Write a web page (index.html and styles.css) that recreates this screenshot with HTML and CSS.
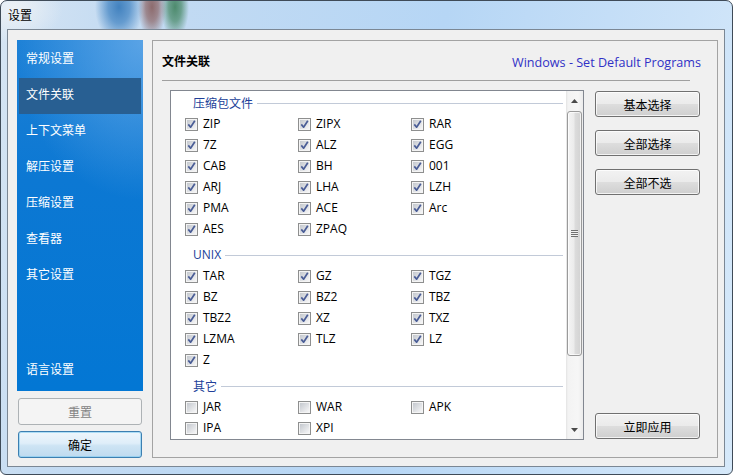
FILE: index.html
```html
<!DOCTYPE html>
<html lang="zh-CN">
<head>
<meta charset="utf-8">
<title>设置</title>
<link rel="stylesheet" href="styles.css">
</head>
<body>
<svg class="defs" width="0" height="0" aria-hidden="true">
  <defs>
    <linearGradient id="cbg" x1="0" y1="0" x2="1" y2="1">
      <stop offset="0" stop-color="#c4c8ce"/>
      <stop offset="1" stop-color="#f6f6f7"/>
    </linearGradient>
    <symbol id="box" viewBox="0 0 13 13">
      <rect x="0.5" y="0.5" width="12" height="12" fill="#f4f4f4" stroke="#8e8f8f"/>
      <rect x="2" y="2" width="9" height="9" fill="url(#cbg)"/>
    </symbol>
    <symbol id="chk" viewBox="0 0 13 13">
      <rect x="0.5" y="0.5" width="12" height="12" fill="#f4f4f4" stroke="#8e8f8f"/>
      <rect x="2" y="2" width="9" height="9" fill="url(#cbg)"/>
      <path d="M3.3 6.4 L5.6 9.2 L9.8 2.8" fill="none" stroke="#4a5d96" stroke-width="1.7" stroke-linejoin="round"/>
    </symbol>
  </defs>
</svg>

<div class="window">
  <div class="titlebar">设置</div>
  <div class="client">
    <div class="leftcol">
      <nav class="sidebar">
        <div class="nav-item">常规设置</div>
        <div class="nav-item active">文件关联</div>
        <div class="nav-item">上下文菜单</div>
        <div class="nav-item">解压设置</div>
        <div class="nav-item">压缩设置</div>
        <div class="nav-item">查看器</div>
        <div class="nav-item">其它设置</div>
        <div class="nav-item lang">语言设置</div>
      </nav>
      <button class="btn disabled wide first">重置</button>
      <button class="btn default wide">确定</button>
    </div>

    <section class="panel">
      <div class="phead">
        <span class="ptitle">文件关联</span>
        <span class="plink">Windows - Set Default Programs</span>
      </div>
      <div class="sep"></div>
      <div class="pbody">
        <div class="listbox">
          <div class="lcontent">
            <div class="ghead"><span class="cjk">压缩包文件</span><i class="gline"></i></div>
            <div class="grid">
              <label class="cb"><svg><use href="#chk"/></svg>ZIP</label>
              <label class="cb"><svg><use href="#chk"/></svg>ZIPX</label>
              <label class="cb"><svg><use href="#chk"/></svg>RAR</label>
              <label class="cb"><svg><use href="#chk"/></svg>7Z</label>
              <label class="cb"><svg><use href="#chk"/></svg>ALZ</label>
              <label class="cb"><svg><use href="#chk"/></svg>EGG</label>
              <label class="cb"><svg><use href="#chk"/></svg>CAB</label>
              <label class="cb"><svg><use href="#chk"/></svg>BH</label>
              <label class="cb"><svg><use href="#chk"/></svg>001</label>
              <label class="cb"><svg><use href="#chk"/></svg>ARJ</label>
              <label class="cb"><svg><use href="#chk"/></svg>LHA</label>
              <label class="cb"><svg><use href="#chk"/></svg>LZH</label>
              <label class="cb"><svg><use href="#chk"/></svg>PMA</label>
              <label class="cb"><svg><use href="#chk"/></svg>ACE</label>
              <label class="cb"><svg><use href="#chk"/></svg>Arc</label>
              <label class="cb"><svg><use href="#chk"/></svg>AES</label>
              <label class="cb"><svg><use href="#chk"/></svg>ZPAQ</label>
            </div>
            <div class="ghead gap"><span>UNIX</span><i class="gline"></i></div>
            <div class="grid">
              <label class="cb"><svg><use href="#chk"/></svg>TAR</label>
              <label class="cb"><svg><use href="#chk"/></svg>GZ</label>
              <label class="cb"><svg><use href="#chk"/></svg>TGZ</label>
              <label class="cb"><svg><use href="#chk"/></svg>BZ</label>
              <label class="cb"><svg><use href="#chk"/></svg>BZ2</label>
              <label class="cb"><svg><use href="#chk"/></svg>TBZ</label>
              <label class="cb"><svg><use href="#chk"/></svg>TBZ2</label>
              <label class="cb"><svg><use href="#chk"/></svg>XZ</label>
              <label class="cb"><svg><use href="#chk"/></svg>TXZ</label>
              <label class="cb"><svg><use href="#chk"/></svg>LZMA</label>
              <label class="cb"><svg><use href="#chk"/></svg>TLZ</label>
              <label class="cb"><svg><use href="#chk"/></svg>LZ</label>
              <label class="cb"><svg><use href="#chk"/></svg>Z</label>
            </div>
            <div class="ghead gap"><span class="cjk">其它</span><i class="gline"></i></div>
            <div class="grid">
              <label class="cb"><svg><use href="#box"/></svg>JAR</label>
              <label class="cb"><svg><use href="#box"/></svg>WAR</label>
              <label class="cb"><svg><use href="#box"/></svg>APK</label>
              <label class="cb"><svg><use href="#box"/></svg>IPA</label>
              <label class="cb"><svg><use href="#box"/></svg>XPI</label>
            </div>
          </div>
          <div class="scrollbar">
            <div class="sarrow"><svg width="7" height="4" viewBox="0 0 7 4"><polygon points="0,4 7,4 3.5,0" fill="#4a4a4a"/></svg></div>
            <div class="thumb"><span class="grip"></span></div>
            <div class="track"></div>
            <div class="sarrow"><svg width="7" height="4" viewBox="0 0 7 4"><polygon points="0,0 7,0 3.5,4" fill="#4a4a4a"/></svg></div>
          </div>
        </div>
        <div class="rbtns">
          <button class="btn rb">基本选择</button>
          <button class="btn rb">全部选择</button>
          <button class="btn rb">全部不选</button>
          <button class="btn rb apply">立即应用</button>
        </div>
      </div>
    </section>
  </div>
</div>
</body>
</html>
```

FILE: styles.css
```css
* { box-sizing: border-box; }

html, body {
  margin: 0;
  padding: 0;
  width: 733px;
  height: 475px;
  overflow: hidden;
  background: #ffffff;
  font-family: "Open Sans", "Noto Sans CJK SC", sans-serif;
  font-size: 12px;
  color: #000;
}

.defs { position: absolute; width: 0; height: 0; overflow: hidden; }

.window {
  width: 733px;
  height: 475px;
  border: 1px solid #3f4b58;
  border-radius: 7px 7px 6px 6px;
  display: flex;
  flex-direction: column;
  background:
    radial-gradient(24px 36px at 118px 6px, rgba(52,120,185,0.9) 0%, rgba(60,128,192,0.7) 45%, rgba(60,128,192,0) 100%),
    radial-gradient(14px 32px at 151px 6px, rgba(135,95,95,0.9) 0%, rgba(140,100,100,0.7) 45%, rgba(140,100,100,0) 100%),
    radial-gradient(14px 32px at 174px 6px, rgba(65,130,95,0.9) 0%, rgba(70,135,100,0.7) 45%, rgba(70,135,100,0) 100%),
    radial-gradient(50px 34px at 12px 8px, rgba(238,242,246,0.95), rgba(238,242,246,0)),
    linear-gradient(100deg, #d6e5f3 0%, #c4dbf2 15%, #b6d6f5 55%, #cbe2f8 85%, #d6e9fa 100%);
  overflow: hidden;
}

.titlebar {
  height: 28px;
  line-height: 28px;
  padding-left: 7px;
  font-family: "Noto Sans CJK SC", sans-serif;
  font-size: 12px;
  color: #000;
}

.client {
  flex: 1;
  margin: 0 7px 7px 6px;
  border: 1px solid #7b8794;
  background: #f0f0f0;
  padding: 10px 6px 8px 9px;
  display: flex;
  gap: 9px;
}

/* left column */
.leftcol {
  width: 126px;
  display: flex;
  flex-direction: column;
}

.sidebar {
  flex: 1;
  padding: 2px;
  display: flex;
  flex-direction: column;
  background:
    radial-gradient(130px 160px at 126px 0px, rgba(110,175,235,0.75), rgba(110,175,235,0)),
    linear-gradient(180deg, #1c80d6 0%, #0c78d3 40%, #0377d4 100%);
}

.nav-item {
  height: 36px;
  line-height: 31px;
  padding-left: 7px;
  color: #ffffff;
  font-family: "Noto Sans CJK SC", sans-serif;
  font-size: 12px;
}

.nav-item.active { background: #285f92; }
.nav-item.lang { margin-top: auto; }

.btn {
  font-family: "Noto Sans CJK SC", sans-serif;
  font-size: 12px;
  color: #000;
  border: 1px solid #707070;
  border-radius: 3px;
  padding: 0;
  background: linear-gradient(180deg, #f2f2f2 0%, #ebebeb 48%, #dddddd 52%, #cfcfcf 100%);
  box-shadow: inset 0 0 0 1px rgba(255,255,255,0.75);
}

.btn.wide {
  width: 124px;
  height: 27px;
  margin: 6px 1px 0 1px;
}
.btn.wide.first { margin-top: 7px; }

.btn.disabled {
  border-color: #adb2b5;
  background: #f4f4f4;
  color: #838383;
  box-shadow: none;
}

.btn.default {
  border-color: #3c7fb1;
  background: linear-gradient(180deg, #eef6fc 0%, #dfeef9 45%, #cde4f4 55%, #bfdaef 100%);
  box-shadow: inset 0 0 0 1px rgba(120,200,240,0.55);
}

/* right panel */
.panel {
  width: 566px;
  border: 1px solid #a3a3a3;
  display: flex;
  flex-direction: column;
}

.phead {
  height: 39px;
  padding: 12px 16px 0 9px;
  display: flex;
  justify-content: space-between;
  align-items: flex-start;
}

.ptitle {
  font-family: "Noto Sans CJK SC", sans-serif;
  font-weight: bold;
  line-height: 16px;
}

.plink {
  color: #3030c6;
  font-size: 12.6px;
  line-height: 16px;
  margin-top: 2px;
}

.sep {
  height: 1px;
  margin: 0 27px 0 9px;
  background: #a0a0a0;
}

.pbody {
  flex: 1;
  display: flex;
  padding: 9px 0 0 17px;
  gap: 11px;
}

.listbox {
  width: 414px;
  height: 350px;
  border: 1px solid #828790;
  background: #ffffff;
  display: flex;
}

.lcontent {
  flex: 1;
}

.ghead {
  height: 22px;
  padding: 2px 0 0 22px;
  display: flex;
  align-items: center;
  color: #213f99;
}
.ghead span { line-height: 16px; }
.ghead .cjk { font-family: "Noto Sans CJK SC", sans-serif; }
.ghead.gap { margin-top: 4px; }

.gline {
  flex: 1;
  height: 1px;
  margin: 0 3px 0 4px;
  background: #c2cad8;
}

.grid {
  display: grid;
  grid-template-columns: 113px 113px 113px;
  grid-auto-rows: 21px;
  padding-left: 14px;
}

.cb {
  display: flex;
  align-items: center;
  gap: 5px;
  line-height: 16px;
  padding-top: 1px;
}
.cb svg { width: 13px; height: 13px; flex: none; }

/* scrollbar */
.scrollbar {
  width: 17px;
  display: flex;
  flex-direction: column;
  background: linear-gradient(90deg, #e3e3e3 0px, #f3f3f3 2px, #f6f6f6 12px, #ececec 17px);
}

.sarrow {
  height: 19px;
  display: flex;
  align-items: center;
  justify-content: center;
}

.thumb {
  height: 245px;
  margin: 1px 1px 0 1px;
  border: 1px solid #9a9a9a;
  border-radius: 3px;
  background: linear-gradient(90deg, #f4f4f4 0%, #ececec 45%, #dcdcdc 55%, #d2d2d2 100%);
  box-shadow: inset 0 0 0 1px rgba(255,255,255,0.7);
  display: flex;
  align-items: center;
  justify-content: center;
}

.grip {
  width: 7px;
  height: 7px;
  background: repeating-linear-gradient(180deg, #707070 0px, #707070 1px, #f0f0f0 1px, #f0f0f0 2px);
}

.track { flex: 1; }

.rbtns {
  width: 105px;
  height: 350px;
  padding: 1px 0 1px 0;
  display: flex;
  flex-direction: column;
  gap: 13px;
}

.btn.rb { height: 26px; }
.btn.rb.apply { margin-top: auto; }
```
